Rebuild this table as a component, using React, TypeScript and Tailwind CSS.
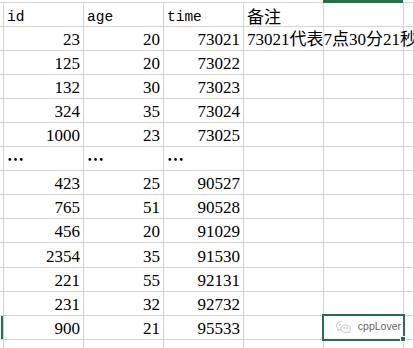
import React from 'react';

const serif = { fontFamily: '"Liberation Serif", "Noto Sans CJK SC", serif' };

const cols = ['w-[80px]', 'w-[80px]', 'w-[80px]', 'w-[80px]', 'w-[80px]', 'w-[10px]'];

type Row = { cells: string[]; kind: 'head' | 'num' | 'dots'; h?: string; sel?: boolean };

const rows: Row[] = [
  { cells: ['id', 'age', 'time', '备注'], kind: 'head' },
  { cells: ['23', '20', '73021', '73021代表7点30分21秒'], kind: 'num' },
  { cells: ['125', '20', '73022'], kind: 'num' },
  { cells: ['132', '30', '73023'], kind: 'num' },
  { cells: ['324', '35', '73024'], kind: 'num' },
  { cells: ['1000', '23', '73025'], kind: 'num' },
  { cells: ['…', '…', '…'], kind: 'dots' },
  { cells: ['423', '25', '90527'], kind: 'num' },
  { cells: ['765', '51', '90528'], kind: 'num' },
  { cells: ['456', '20', '91029'], kind: 'num' },
  { cells: ['2354', '35', '91530'], kind: 'num', h: 'h-[25px]' },
  { cells: ['221', '55', '92131'], kind: 'num' },
  { cells: ['231', '32', '92732'], kind: 'num' },
  { cells: ['900', '21', '95533'], kind: 'num', sel: true },
  { cells: [], kind: 'num' },
];

function Cell({ row, i }: { row: Row; i: number }) {
  const v = row.cells[i];
  const base = `${cols[i]} shrink-0 h-full border-r border-[#d4d4d4] px-[3px] flex items-end`;
  if (!v) return <div className={base} />;
  if (row.kind === 'head') {
    if (i === 3)
      return (
        <div className={base}>
          <span className="text-[17px] leading-[17px] mb-[2px] text-black" style={{ fontFamily: '"Noto Sans CJK SC", sans-serif' }}>{v}</span>
        </div>
      );
    return (
      <div className={base}>
        <span className="text-[14.5px] leading-[15px] mb-[1px] text-black" style={{ fontFamily: '"Liberation Mono", monospace' }}>{v}</span>
      </div>
    );
  }
  if (row.kind === 'dots')
    return (
      <div className={base}>
        <span className="text-[17px] leading-[17px] mb-[3px] font-bold text-black" style={{ fontFamily: '"Noto Sans CJK SC", sans-serif' }}>{v}</span>
      </div>
    );
  if (i === 3)
    return (
      <div className={`${base} overflow-visible relative z-10`}>
        <span className="text-[17px] leading-[17px] mb-[2px] whitespace-nowrap text-black" style={serif}>{v}</span>
      </div>
    );
  return (
    <div className={`${base} justify-end`}>
      <span className="text-[17px] leading-[17px] mb-[2px] text-black" style={serif}>{v}</span>
    </div>
  );
}

function Watermark() {
  return (
    <div className="flex items-center gap-[6px] pr-[2px] pb-[1px]">
      <svg width="17" height="14" viewBox="0 0 17 14" fill="none" stroke="#c4c4c4" strokeWidth="1">
        <path d="M7 1.5c-3.2 0-5.5 2-5.5 4.4 0 1.3.7 2.4 1.8 3.2l-.5 1.6 1.9-1c.7.2 1.4.3 2.2.3" />
        <path d="M10.5 5c2.7 0 4.8 1.7 4.8 3.8 0 1.1-.6 2.1-1.5 2.8l.4 1.4-1.6-.9c-.7.2-1.4.3-2.1.3-2.7 0-4.8-1.7-4.8-3.7S7.8 5 10.5 5z" />
        <circle cx="5" cy="4.6" r=".6" fill="#c4c4c4" />
        <circle cx="9.2" cy="8" r=".5" fill="#c4c4c4" />
        <circle cx="12" cy="8" r=".5" fill="#c4c4c4" />
      </svg>
      <span className="text-[10.5px] text-[#666]" style={{ fontFamily: '"Liberation Sans", sans-serif' }}>cppLover</span>
    </div>
  );
}

export default function App() {
  return (
    <div className="w-[414px] h-[348px] overflow-hidden bg-white relative">
      <div className="flex h-[3px] border-b border-[#d4d4d4]">
        <div className="w-[4px] shrink-0" />
        <div className="w-[80px] shrink-0" />
        <div className="w-[80px] shrink-0" />
        <div className="w-[80px] shrink-0" />
        <div className="w-[80px] shrink-0" />
        <div className="w-[80px] shrink-0 bg-[#217346] -mb-px -ml-px" />
        <div className="w-[10px] shrink-0" />
      </div>
      {rows.map((row, r) => (
        <div key={r} className={`flex ${row.h ?? 'h-[24px]'} border-b border-[#d4d4d4]`}>
          <div className="w-[4px] shrink-0 border-r border-[#d4d4d4] flex">
            {row.sel && <div className="w-[3px] ml-[1px] bg-[#217346]" />}
          </div>
          {cols.map((_, i) => (
            <Cell key={i} row={row} i={i} />
          ))}
        </div>
      ))}
      <div className="absolute left-[322px] top-[314px] w-[83px] h-[27px] border-2 border-[#217346] flex items-center justify-end">
        <Watermark />
        <div className="absolute -right-[3px] -bottom-[3px] w-[6px] h-[6px] bg-[#217346] border border-white" />
      </div>
    </div>
  );
}
